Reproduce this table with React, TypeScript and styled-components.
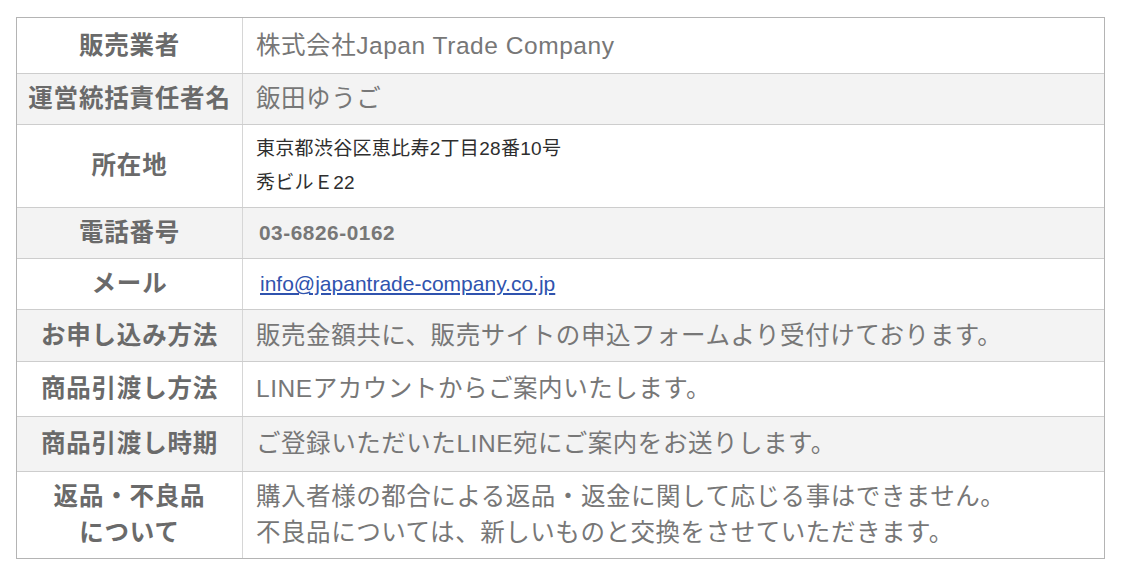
import React from "react";
import styled, { createGlobalStyle } from "styled-components";

const GlobalStyle = createGlobalStyle`
  html, body {
    margin: 0;
    padding: 0;
    background: #ffffff;
  }
  body {
    font-family: "Liberation Sans", "Noto Sans CJK JP", sans-serif;
  }
`;

const Page = styled.div`
  padding: 17px 20px 0 16px;
  width: 1125px;
  box-sizing: border-box;
`;

const Table = styled.div`
  width: 1089px;
  box-sizing: border-box;
  border: 1px solid #b4b4b4;
  display: flex;
  flex-direction: column;
`;

const Row = styled.div<{ $alt?: boolean; $h: number; $last?: boolean }>`
  display: grid;
  grid-template-columns: 226px 1fr;
  height: ${(p) => p.$h}px;
  box-sizing: content-box;
  background: ${(p) => (p.$alt ? "#f3f3f3" : "#ffffff")};
  border-bottom: ${(p) => (p.$last ? "none" : "1px solid #cdcdcd")};
`;

const Label = styled.div`
  border-right: 1px solid #d6d6d6;
  display: flex;
  align-items: center;
  justify-content: center;
  text-align: center;
  font-weight: 700;
  font-size: 24.5px;
  line-height: 36px;
  color: #6a6a6a;
  letter-spacing: 0.8px;
`;

const Value = styled.div<{ $kind?: "text" | "address" | "phone" | "mail" }>`
  display: flex;
  flex-direction: column;
  justify-content: center;
  padding-left: ${(p) => (p.$kind === "phone" ? 16 : p.$kind === "mail" ? 17 : 13)}px;
  font-size: ${(p) =>
    p.$kind === "address" ? 19 : p.$kind === "phone" ? 20.8 : p.$kind === "mail" ? 21 : 24.5}px;
  font-weight: ${(p) => (p.$kind === "phone" ? 700 : 400)};
  line-height: ${(p) => (p.$kind === "address" ? 34 : 36)}px;
  color: ${(p) => (p.$kind === "address" ? "#2e2e2e" : "#777777")};
  letter-spacing: ${(p) => (p.$kind === "address" ? "0.3px" : "0.55px")};
  white-space: nowrap;
`;

const Mail = styled.a`
  color: #2f53ae;
  text-decoration: underline;
  text-underline-offset: 2px;
  letter-spacing: 0;
`;

type Item = {
  label: React.ReactNode;
  value: React.ReactNode;
  h: number;
  kind?: "text" | "address" | "phone" | "mail";
};

const items: Item[] = [
  { label: "販売業者", value: "株式会社Japan Trade Company", h: 55 },
  { label: "運営統括責任者名", value: "飯田ゆうご", h: 50 },
  {
    label: "所在地",
    value: (
      <>
        <span>東京都渋谷区恵比寿2丁目28番10号</span>
        <span>秀ビルＥ22</span>
      </>
    ),
    h: 82,
    kind: "address",
  },
  { label: "電話番号", value: "03-6826-0162", h: 50, kind: "phone" },
  {
    label: "メール",
    value: <Mail href="#">info@japantrade-company.co.jp</Mail>,
    h: 50,
    kind: "mail",
  },
  {
    label: "お申し込み方法",
    value: "販売金額共に、販売サイトの申込フォームより受付けております。",
    h: 51,
  },
  { label: "商品引渡し方法", value: "LINEアカウントからご案内いたします。", h: 54 },
  { label: "商品引渡し時期", value: "ご登録いただいたLINE宛にご案内をお送りします。", h: 54 },
  {
    label: (
      <>
        返品・不良品
        <br />
        について
      </>
    ),
    value: (
      <>
        <span>購入者様の都合による返品・返金に関して応じる事はできません。</span>
        <span>不良品については、新しいものと交換をさせていただきます。</span>
      </>
    ),
    h: 86,
  },
];

export default function App() {
  return (
    <>
      <GlobalStyle />
      <Page>
        <Table>
          {items.map((it, i) => (
            <Row key={i} $alt={i % 2 === 1} $h={it.h} $last={i === items.length - 1}>
              <Label>
                <div>{it.label}</div>
              </Label>
              <Value $kind={it.kind}>{it.value}</Value>
            </Row>
          ))}
        </Table>
      </Page>
    </>
  );
}
